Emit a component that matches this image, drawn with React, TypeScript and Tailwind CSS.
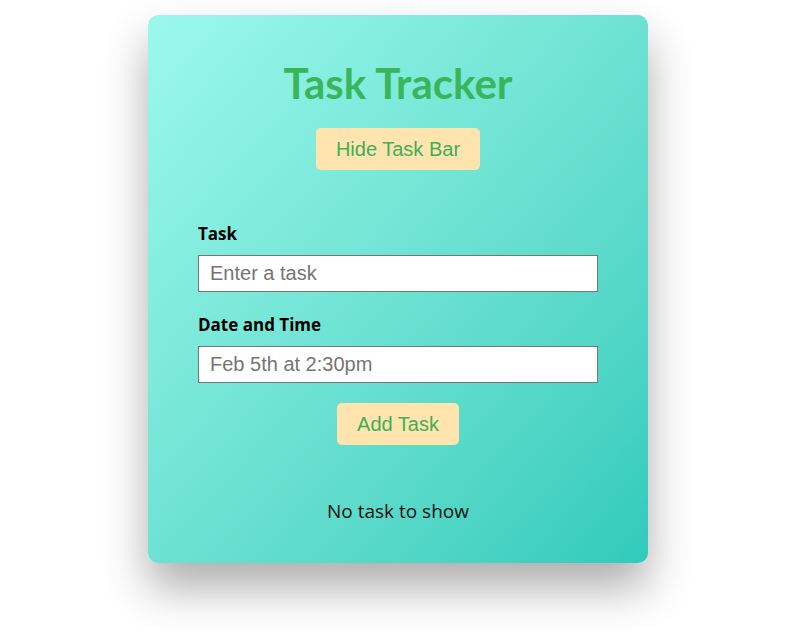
import React from "react";

export default function App() {
  return (
    <div className="min-h-[632px] w-full bg-white pt-[15px] pl-[148px] font-['Open_Sans',sans-serif]">
      <div className="flex h-[548px] w-[500px] flex-col items-center rounded-[10px] bg-gradient-to-br from-[#9bf9ec] to-[#2ecbba] px-[50px] shadow-[0_25px_45px_rgba(0,0,0,0.32)]">
        <h1 className="mt-[43px] font-['Lato','Open_Sans',sans-serif] text-[42px] font-bold leading-[50px] text-[#39b65a]">
          Task Tracker
        </h1>
        <button className="mt-[20px] h-[42px] w-[164px] rounded-[5px] bg-[#ffe5ad] font-['Liberation_Sans',Arial,sans-serif] text-[20px] text-[#3fae5a]">
          Hide Task Bar
        </button>
        <form className="mt-[53px] flex w-full flex-col">
          <label className="text-[17px] font-bold leading-[22px] text-black">Task</label>
          <input
            placeholder="Enter a task"
            className="mt-[10px] h-[37px] w-full border border-[#767676] bg-white px-[11px] font-['Liberation_Sans',Arial,sans-serif] text-[20px] text-black outline-none placeholder:text-[#757575]"
          />
          <label className="mt-[22px] text-[17px] font-bold leading-[22px] text-black">Date and Time</label>
          <input
            placeholder="Feb 5th at 2:30pm"
            className="mt-[10px] h-[37px] w-full border border-[#767676] bg-white px-[11px] font-['Liberation_Sans',Arial,sans-serif] text-[20px] text-black outline-none placeholder:text-[#757575]"
          />
          <button
            type="button"
            className="mx-auto mt-[20px] h-[42px] w-[122px] rounded-[5px] bg-[#ffe5ad] font-['Liberation_Sans',Arial,sans-serif] text-[20px] text-[#3fae5a]"
          >
            Add Task
          </button>
        </form>
        <p className="mt-[53px] text-[19px] leading-[26px] text-[#111]">No task to show</p>
      </div>
    </div>
  );
}
